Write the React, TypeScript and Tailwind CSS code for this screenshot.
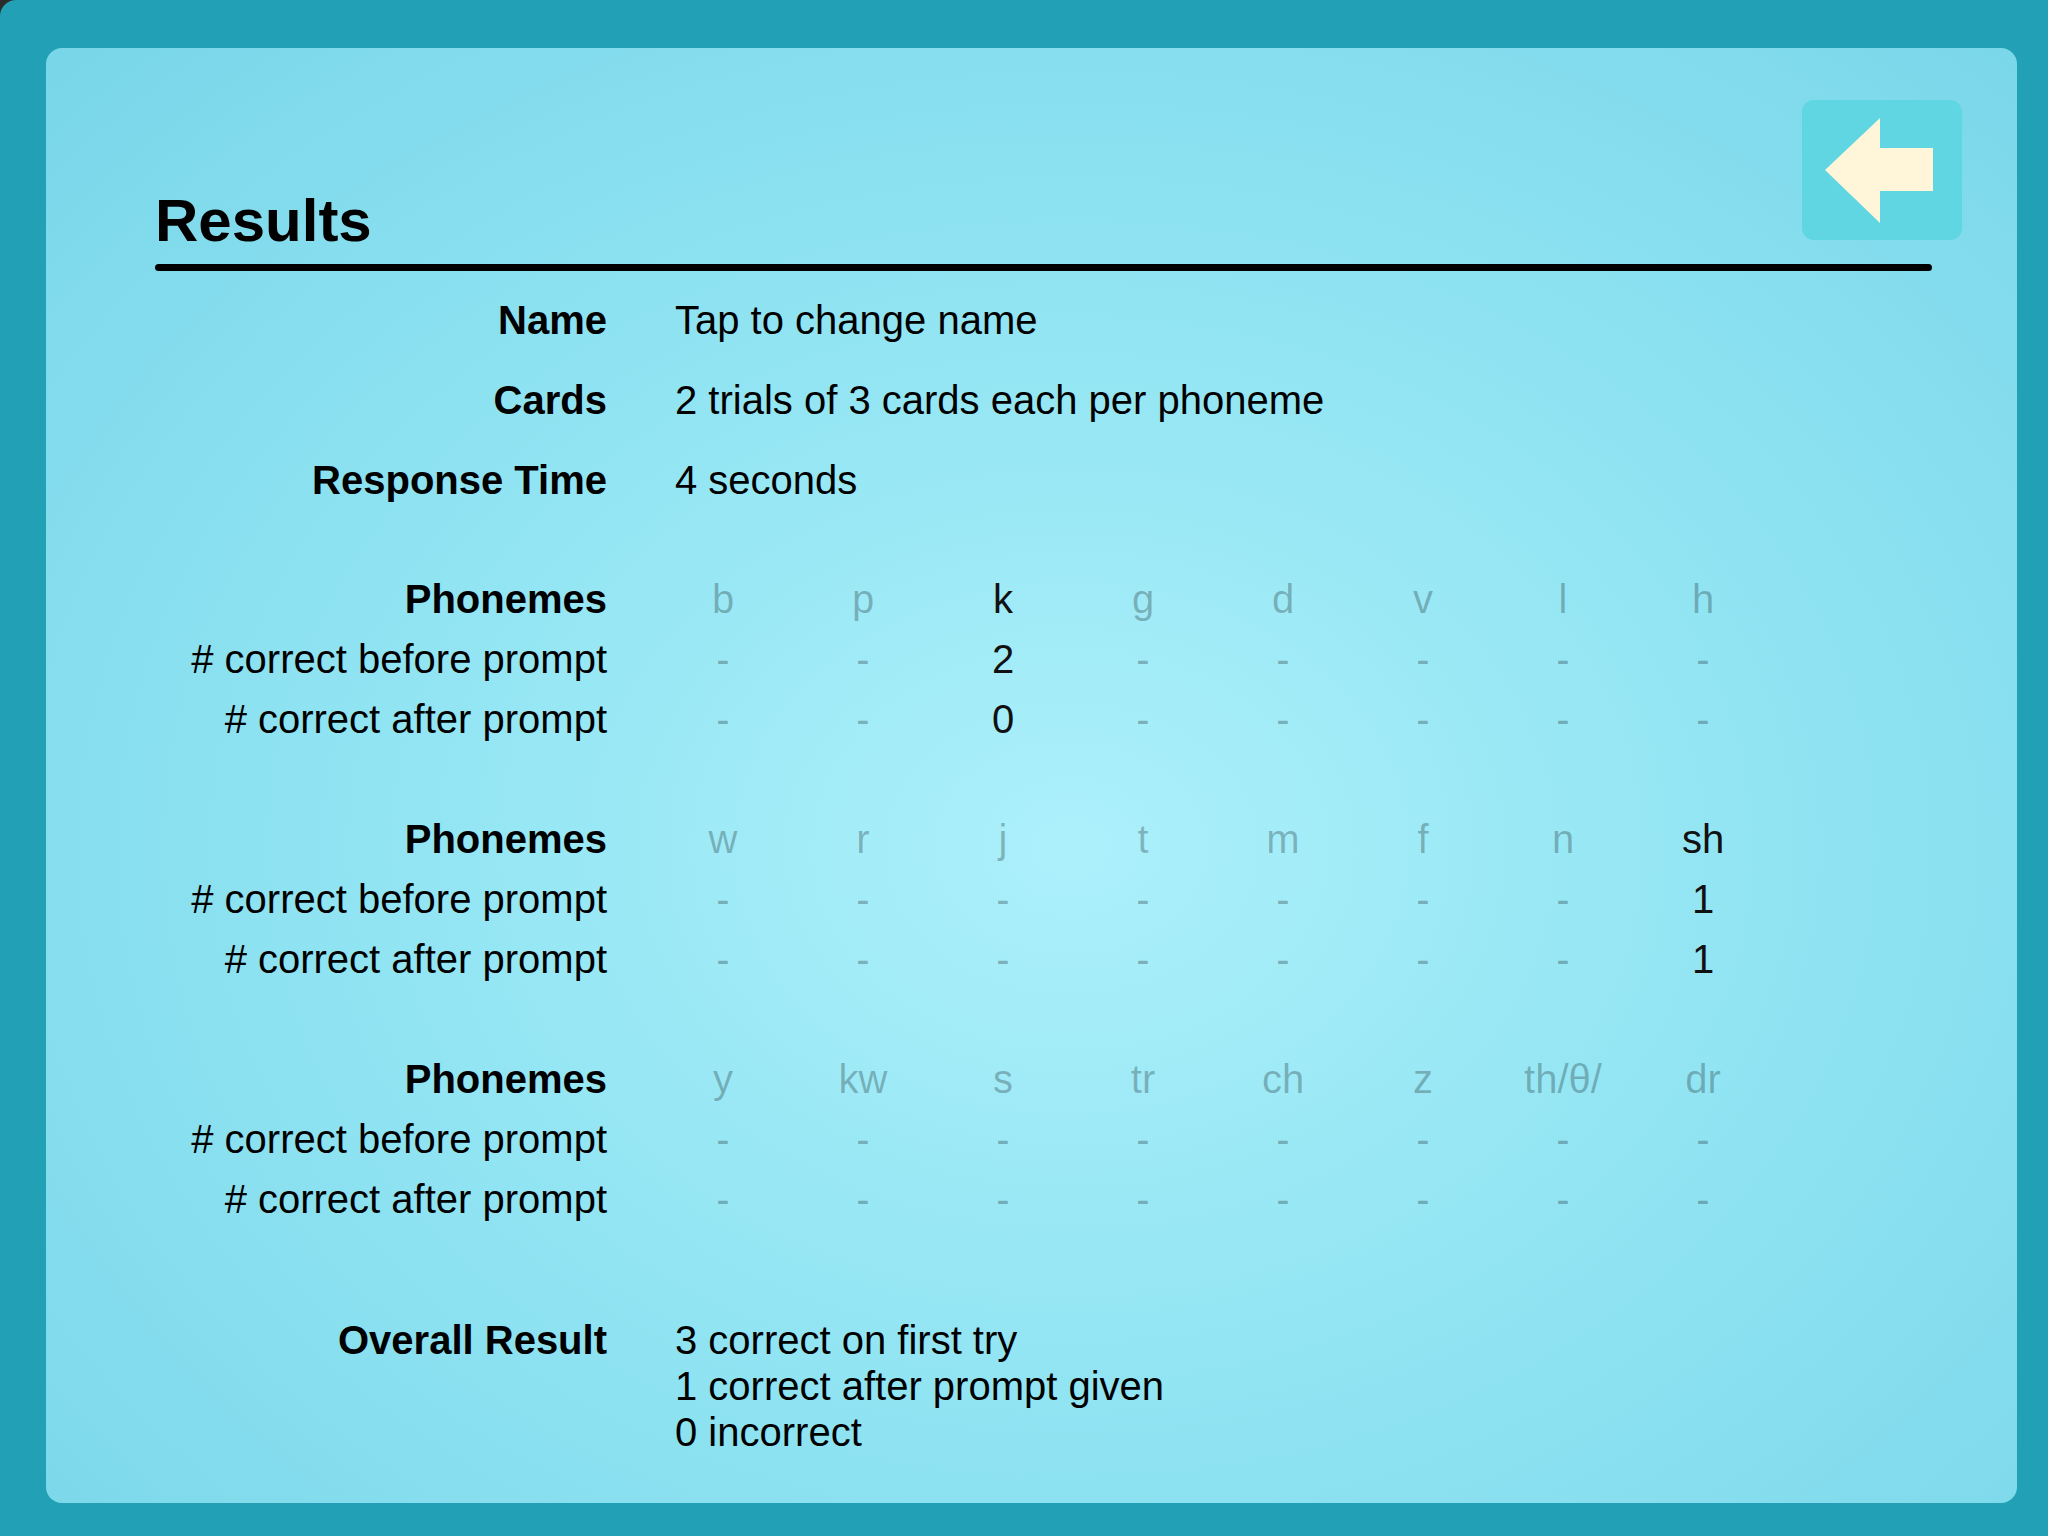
import React from 'react'

type Group = {
  sounds: string[]
  before: (number | null)[]
  after: (number | null)[]
}

const GROUPS: Group[] = [
  {
    sounds: ['b', 'p', 'k', 'g', 'd', 'v', 'l', 'h'],
    before: [null, null, 2, null, null, null, null, null],
    after: [null, null, 0, null, null, null, null, null],
  },
  {
    sounds: ['w', 'r', 'j', 't', 'm', 'f', 'n', 'sh'],
    before: [null, null, null, null, null, null, null, 1],
    after: [null, null, null, null, null, null, null, 1],
  },
  {
    sounds: ['y', 'kw', 's', 'tr', 'ch', 'z', 'th/θ/', 'dr'],
    before: [null, null, null, null, null, null, null, null],
    after: [null, null, null, null, null, null, null, null],
  },
]

function BackButton() {
  return (
    <button className="flex h-[140px] w-[160px] shrink-0 items-center justify-center rounded-[12px] bg-[#5fd6e2]">
      <svg width="160" height="140" viewBox="0 0 160 140">
        <polygon
          points="23,70 78,18 78,48 131,48 131,91 78,91 78,123"
          fill="#fff5d8"
        />
      </svg>
    </button>
  )
}

function InfoRow({ label, value }: { label: string; value: string }) {
  return (
    <div className="flex h-[80px] items-center">
      <div className="w-[452px] shrink-0 text-right font-bold">{label}</div>
      <div className="ml-[68px]">{value}</div>
    </div>
  )
}

function Cell({ value, strong }: { value: string; strong: boolean }) {
  return (
    <div
      className={
        strong
          ? 'w-[140px] text-center text-[#111]'
          : 'w-[140px] text-center text-black/25'
      }
    >
      {value}
    </div>
  )
}

function PhonemeGroup({ group }: { group: Group }) {
  const active = group.before.map((b, i) => b !== null || group.after[i] !== null)
  const rows: { label: string; bold: boolean; cells: string[] }[] = [
    { label: 'Phonemes', bold: true, cells: group.sounds },
    {
      label: '# correct before prompt',
      bold: false,
      cells: group.before.map((v) => (v === null ? '-' : String(v))),
    },
    {
      label: '# correct after prompt',
      bold: false,
      cells: group.after.map((v) => (v === null ? '-' : String(v))),
    },
  ]

  return (
    <div className="flex flex-col">
      {rows.map((row) => (
        <div key={row.label} className="flex h-[60px] items-center">
          <div
            className={
              row.bold
                ? 'w-[452px] shrink-0 text-right font-bold'
                : 'w-[452px] shrink-0 text-right'
            }
          >
            {row.label}
          </div>
          <div className="ml-[46px] flex">
            {row.cells.map((c, i) => (
              <Cell key={i} value={c} strong={active[i]} />
            ))}
          </div>
        </div>
      ))}
    </div>
  )
}

export default function App() {
  return (
    <div className="h-[1536px] w-[2048px] bg-[#2b2b2b] font-['Liberation_Sans',Arial,sans-serif] text-[40px] text-black">
      <div className="h-full w-full rounded-tl-[16px] bg-[#22a0b5] pb-[33px] pl-[46px] pr-[31px] pt-[48px]">
        <div className="h-full w-full rounded-[16px] bg-[radial-gradient(ellipse_at_52%_55%,#acf0fb_0%,#93e5f3_45%,#78d6e8_100%)] pl-[109px] pr-[55px] pt-[52px]">
          <div className="flex items-start justify-between">
            <h1 className="mt-[91px] text-[60px] font-bold leading-none">Results</h1>
            <BackButton />
          </div>
          <div className="mr-[30px] mt-[13px] h-[7px] rounded-full bg-black" />

          <div className="mt-[9px] flex flex-col">
            <InfoRow label="Name" value="Tap to change name" />
            <InfoRow label="Cards" value="2 trials of 3 cards each per phoneme" />
            <InfoRow label="Response Time" value="4 seconds" />
          </div>

          <div className="mt-[49px] flex flex-col gap-[60px]">
            {GROUPS.map((g, i) => (
              <PhonemeGroup key={i} group={g} />
            ))}
          </div>

          <div className="mt-[88px] flex leading-[46px]">
            <div className="w-[452px] shrink-0 text-right font-bold">Overall Result</div>
            <div className="ml-[68px] flex flex-col">
              <span>3 correct on first try</span>
              <span>1 correct after prompt given</span>
              <span>0 incorrect</span>
            </div>
          </div>
        </div>
      </div>
    </div>
  )
}
